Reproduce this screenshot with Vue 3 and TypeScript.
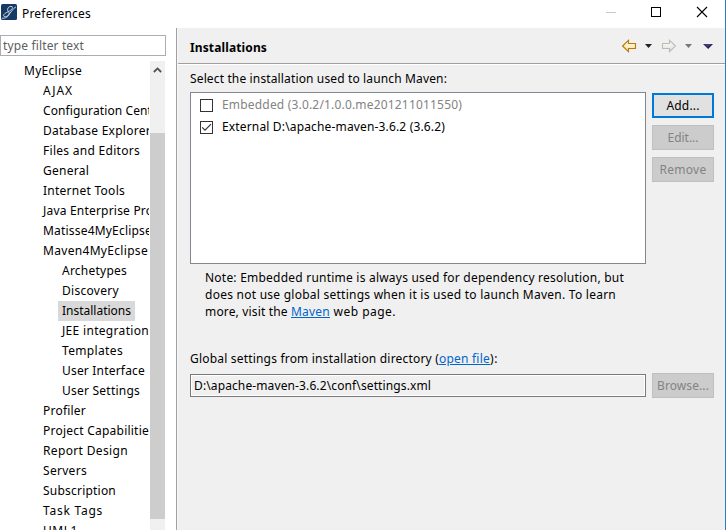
<script setup lang="ts">
interface TreeItem {
  label: string
  level: number
  width: number
  selected?: boolean
}

const items: TreeItem[] = [
  { label: 'MyEclipse', level: 0, width: 58 },
  { label: 'AJAX', level: 1, width: 30 },
  { label: 'Configuration Center', level: 1, width: 121 },
  { label: 'Database Explorer', level: 1, width: 108 },
  { label: 'Files and Editors', level: 1, width: 97 },
  { label: 'General', level: 1, width: 46 },
  { label: 'Internet Tools', level: 1, width: 82 },
  { label: 'Java Enterprise Project', level: 1, width: 131 },
  { label: 'Matisse4MyEclipse', level: 1, width: 109 },
  { label: 'Maven4MyEclipse', level: 1, width: 105 },
  { label: 'Archetypes', level: 2, width: 65 },
  { label: 'Discovery', level: 2, width: 57 },
  { label: 'Installations', level: 2, width: 69, selected: true },
  { label: 'JEE integration', level: 2, width: 87 },
  { label: 'Templates', level: 2, width: 61 },
  { label: 'User Interface', level: 2, width: 83 },
  { label: 'User Settings', level: 2, width: 78 },
  { label: 'Profiler', level: 1, width: 43 },
  { label: 'Project Capabilities', level: 1, width: 112 },
  { label: 'Report Design', level: 1, width: 85 },
  { label: 'Servers', level: 1, width: 44 },
  { label: 'Subscription', level: 1, width: 73 },
  { label: 'Task Tags', level: 1, width: 60 },
  { label: 'UML1', level: 1, width: 35 },
]

// Tracks a label's letters so that it takes the given width in pixels.
const vFit = {
  mounted(el: HTMLElement, binding: { value: number }) {
    const count = (el.textContent ?? '').length
    const natural = el.getBoundingClientRect().width
    el.style.letterSpacing = `${(binding.value - natural) / count}px`
  },
}
</script>

<template>
  <div class="window">
    <header class="titlebar">
      <svg class="logo" width="16" height="16" viewBox="0 0 16 16">
        <rect width="16" height="16" rx="1.5" fill="#153a66" />
        <path d="M.8 14.2C4.5 14.6 7.8 12.5 8.2 10C8.5 7.8 6.3 7.2 6.6 5.2C6.9 3 10 1.6 11.2 2.7C12.4 4 9.8 6.5 7.4 7.6C4.6 8.9 2.4 10.2 2.6 11.8C2.8 13.2 5.6 13 7.4 11.2C9.6 9 11.5 4.8 15 2.8" fill="none" stroke="#c9d7e5" stroke-width="1" />
      </svg>
      <span class="title"><span v-fit="69" class="t">Preferences</span></span>
      <svg class="controls" width="110" height="24" viewBox="0 0 110 24" fill="none">
        <path d="M2 12.5h10" stroke="#c9c9c9" />
        <rect x="47.5" y="7.5" width="9" height="9" stroke="#000" />
        <path d="M93 7l10 10M103 7l-10 10" stroke="#000" stroke-width="1.1" />
      </svg>
    </header>
    <div class="body">
      <aside class="side">
        <div class="filter"><span v-fit="81" class="t">type filter text</span></div>
        <div class="tree">
          <ul class="list">
            <li v-for="item in items" :key="item.label" :class="['row', `level-${item.level}`]">
              <span :class="['cell', { selected: item.selected }]"><span v-fit="item.width" class="t">{{ item.label }}</span></span>
            </li>
          </ul>
          <div class="scroll">
            <svg class="up" width="15" height="17" viewBox="0 0 15 17">
              <path d="M3.9 11L7.5 7.4L11.1 11" fill="none" stroke="#505050" stroke-width="1.8" />
            </svg>
            <div class="thumb"></div>
          </div>
        </div>
      </aside>
      <main class="page">
        <div class="head">
          <h1 class="heading"><span v-fit="77" class="t">Installations</span></h1>
          <svg class="nav" width="96" height="16" viewBox="0 0 96 16">
            <defs>
              <linearGradient id="back" x1="0" y1="0" x2="0" y2="1">
                <stop offset="0" stop-color="#fffef0" />
                <stop offset="1" stop-color="#ffe28a" />
              </linearGradient>
              <linearGradient id="next" x1="0" y1="0" x2="0" y2="1">
                <stop offset="0" stop-color="#ffffff" />
                <stop offset="1" stop-color="#dededa" />
              </linearGradient>
            </defs>
            <path d="M.6 8L6.5 2.3V5.5H13.5V10.5H6.5V13.7Z" fill="url(#back)" stroke="#b87912" stroke-width="1.15" />
            <path d="M23 6h7L26.5 10Z" fill="#222" />
            <path d="M53.4 8L47.5 2.3V5.5H40.5V10.5H47.5V13.7Z" fill="url(#next)" stroke="#bcbcb4" stroke-width="1.1" />
            <path d="M63 6h7L66.5 10Z" fill="#77777a" />
            <path d="M81 6h10L86.2 11Z" fill="#29264f" />
            <path d="M82 6h7.5L86 9Z" fill="#5650a0" opacity=".55" />
          </svg>
        </div>
        <div class="content">
          <p class="label select"><span v-fit="257" class="t">Select the installation used to launch Maven:</span></p>
          <div class="choice">
            <div class="runtimes">
              <div class="runtime muted">
                <svg class="check" width="13" height="13" viewBox="0 0 13 13"><rect x=".5" y=".5" width="12" height="12" fill="#fff" stroke="#333" /></svg>
                <span v-fit="240" class="t">Embedded (3.0.2/1.0.0.me201211011550)</span>
              </div>
              <div class="runtime">
                <svg class="check" width="13" height="13" viewBox="0 0 13 13">
                  <rect x=".5" y=".5" width="12" height="12" fill="#fff" stroke="#333" />
                  <path d="M2.2 6.3L5 9.1L11 3.1" fill="none" stroke="#333" stroke-width="1.2" />
                </svg>
                <span v-fit="223" class="t">External D:\apache-maven-3.6.2 (3.6.2)</span>
              </div>
            </div>
            <div class="buttons">
              <button class="button primary"><span v-fit="33" class="t">Add...</span></button>
              <button class="button" disabled><span v-fit="31" class="t">Edit...</span></button>
              <button class="button" disabled><span v-fit="47" class="t">Remove</span></button>
            </div>
          </div>
          <div class="note">
            <p><span v-fit="419" class="t">Note: Embedded runtime is always used for dependency resolution, but</span></p>
            <p><span v-fit="411" class="t">does not use global settings when it is used to launch Maven. To learn</span></p>
            <p><span v-fit="86" class="t">more, visit the&nbsp;</span><a v-fit="39" class="t">Maven</a><span v-fit="66" class="t">&nbsp;web page.</span></p>
          </div>
          <p class="label global"><span v-fit="249" class="t">Global settings from installation directory (</span><a v-fit="51" class="t">open file</a><span v-fit="8" class="t">):</span></p>
          <div class="path-row">
            <div class="path"><span v-fit="237" class="t">D:\apache-maven-3.6.2\conf\settings.xml</span></div>
            <button class="button" disabled><span v-fit="52" class="t">Browse...</span></button>
          </div>
        </div>
      </main>
    </div>
  </div>
</template>

<style>
body {
  margin: 0;
  overflow: hidden;
}
</style>

<style scoped>
.window {
  box-sizing: border-box;
  display: flex;
  flex-direction: column;
  width: 726px;
  height: 530px;
  overflow: hidden;
  border-right: 1px solid #2b7cc0;
  background: #fff;
  color: #000;
  font-family: "Noto Sans", "Open Sans", sans-serif;
  font-size: 12px;
  line-height: 20px;
}
p, h1, ul {
  margin: 0;
  padding: 0;
}
.t {
  white-space: pre;
}
.titlebar {
  display: flex;
  flex: none;
  align-items: center;
  height: 24px;
  padding: 0 16px 4px 1px;
}
.logo {
  display: block;
  margin-top: 0;
}
.title {
  flex: 1;
  margin: 3px 0 0 5px;
}
.controls {
  margin-right: -5px;
}
.body {
  display: flex;
  flex: 1;
  min-height: 0;
}
.side {
  display: flex;
  flex-direction: column;
  box-sizing: border-box;
  width: 178px;
  padding: 7px 10px 0 0;
  border-right: 1px solid #f7f7f7;
  box-shadow: inset -1px 0 #a0a0a0;
}
.filter {
  box-sizing: border-box;
  flex: none;
  width: 166px;
  height: 21px;
  padding-left: 2px;
  border: 1px solid #abadb3;
  color: #606060;
  line-height: 20px;
}
.tree {
  display: flex;
  flex: 1;
  min-height: 0;
  width: 165px;
  margin-top: 5px;
}
.list {
  width: 149px;
  margin-right: 1px;
  overflow: hidden;
  list-style: none;
}
.row {
  height: 20px;
  white-space: nowrap;
}
.level-0 { padding-left: 20px; }
.level-1 { padding-left: 39px; }
.level-2 { padding-left: 58px; }
.cell {
  display: inline-block;
  height: 20px;
  padding: 0 4px;
}
.selected {
  background: #d9d9d9;
}
.scroll {
  width: 15px;
  background: #f0f0f0;
}
.up {
  display: block;
}
.thumb {
  height: 386px;
  margin-top: 55px;
  background: #cdcdcd;
}
.page {
  flex: 1;
  min-width: 0;
  background: #f0f0f0;
}
.head {
  box-sizing: border-box;
  display: flex;
  justify-content: space-between;
  align-items: center;
  height: 36px;
  padding: 0 7px 0 12px;
  border-bottom: 1px solid #a0a0a0;
  box-shadow: 0 1px #fff;
}
.heading {
  margin-top: 4px;
  font-size: 12px;
  line-height: 20px;
}
.content {
  padding: 5px 11px 0 12px;
}
.label {
  height: 20px;
}
.choice {
  display: flex;
  gap: 6px;
  margin-top: 3px;
}
.runtimes {
  box-sizing: border-box;
  width: 456px;
  height: 172px;
  padding-top: 1px;
  border: 1px solid #828790;
  background: #fff;
}
.runtime {
  display: flex;
  align-items: center;
  gap: 9px;
  height: 22px;
  padding-left: 9px;
}
.muted {
  color: #838383;
}
.buttons {
  display: flex;
  flex-direction: column;
  gap: 7px;
  padding-top: 1px;
}
.button {
  box-sizing: border-box;
  display: flex;
  justify-content: center;
  align-items: center;
  width: 62px;
  height: 25px;
  padding: 0;
  border: 1px solid #bfbfbf;
  background: #ccc;
  color: #838383;
  font: inherit;
}
.primary {
  border: 2px solid #0078d7;
  background: #e1e1e1;
  color: #000;
}
.note {
  padding: 5px 0 0 15px;
}
.note p {
  height: 17px;
  line-height: 17px;
}
a {
  color: #0066cc;
  text-decoration: underline;
}
.global {
  margin-top: 29px;
}
.path-row {
  display: flex;
  gap: 6px;
  margin-top: 4px;
}
.path {
  box-sizing: border-box;
  width: 456px;
  height: 23px;
  margin-top: 1px;
  padding-left: 3px;
  border: 1px solid #7a7a7a;
  box-shadow: inset 0 0 0 1px #fff;
  line-height: 21px;
}
</style>
